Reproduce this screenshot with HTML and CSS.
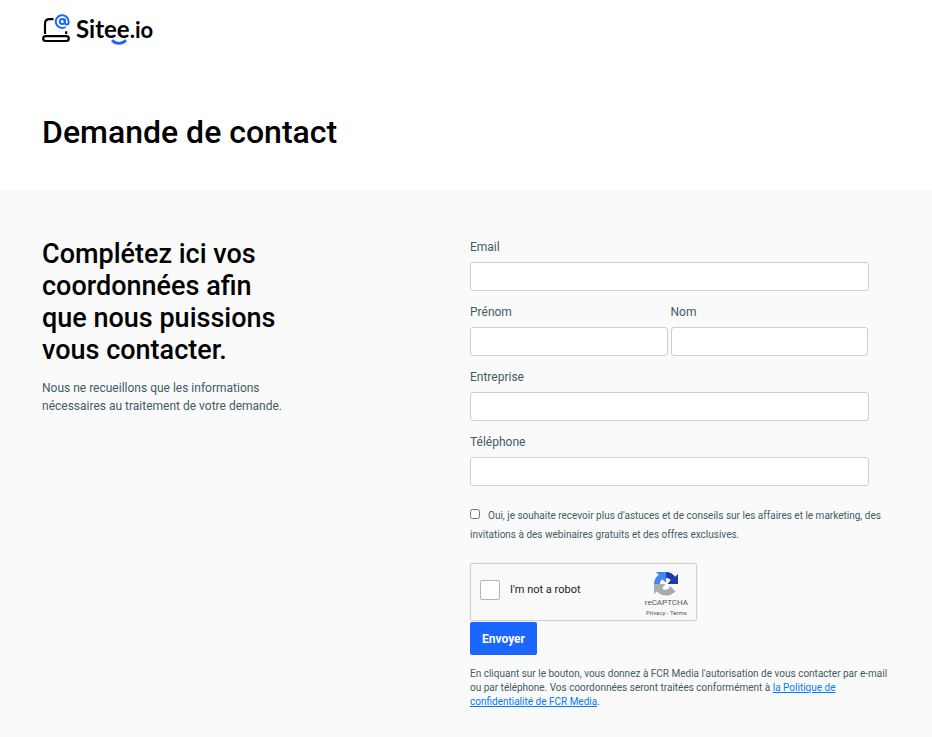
FILE: index.html
```html
<!DOCTYPE html>
<html lang="fr">
<head>
<meta charset="utf-8">
<meta name="viewport" content="width=device-width, initial-scale=1">
<title>Demande de contact</title>
<link rel="stylesheet" href="styles.css">
</head>
<body>
<header class="header">
  <a class="logo" href="#">
    <svg class="logo-mark" viewBox="0 0 28 32" fill="none" aria-hidden="true">
      <path d="M3 20V10C3 7 4.800 5.200 7.500 5.200h4M24.200 17.200v2.800" stroke="#000" stroke-width="2.200"/>
      <rect x="1.200" y="22.200" width="25.600" height="4.800" rx="2.400" stroke="#000" stroke-width="2.200"/>
      <path d="M23.600 13A6.400 6.400 0 1 1 26.600 7.500v.7c0 3-3.700 3-3.700.2V4.700" stroke="#1a66ff" stroke-width="2"/>
      <circle cx="20.300" cy="7.500" r="2.500" stroke="#1a66ff" stroke-width="2"/>
    </svg>
    <span class="logo-text"><span class="logo-name">Sitee</span>.io
      <svg class="logo-smile" viewBox="0 0 18 8" fill="none" aria-hidden="true"><path d="M2 2.200c4 4.200 10 4.200 14 0" stroke="#1a66ff" stroke-width="2.800"/></svg>
    </span>
  </a>
  <h1 class="title">Demande de contact</h1>
</header>
<main class="content">
  <section class="intro">
    <h2 class="intro-title">Complétez ici vos coordonnées afin que nous puissions vous contacter.</h2>
    <p class="intro-text">Nous ne recueillons que les informations nécessaires au traitement de votre demande.</p>
  </section>
  <form class="form">
    <div class="fields">
      <div class="field"><label for="email">Email</label><input id="email" type="email"></div>
      <div class="row">
        <div class="field"><label for="firstname">Prénom</label><input id="firstname" type="text"></div>
        <div class="field"><label for="lastname">Nom</label><input id="lastname" type="text"></div>
      </div>
      <div class="field"><label for="company">Entreprise</label><input id="company" type="text"></div>
      <div class="field"><label for="phone">Téléphone</label><input id="phone" type="tel"></div>
    </div>
    <label class="consent"><input class="consent-box" type="checkbox">Oui, je souhaite recevoir plus d'astuces et de conseils sur les affaires et le marketing, des invitations à des webinaires gratuits et des offres exclusives.</label>
    <div class="captcha">
      <label class="captcha-check"><input class="captcha-box" type="checkbox">I'm not a robot</label>
      <div class="captcha-brand">
        <svg class="captcha-logo" viewBox="0 0 64 64" aria-hidden="true">
          <path fill="#1c3aa9" d="M64 32V5l-7.500 7.500A32 32 0 0 0 32 0v16c5 0 9 1.500 12.500 5.500L36 32h28z"/>
          <path fill="#4285f4" d="M32 0H5l7.500 7.500A32 32 0 0 0 0 32h16c0-5 1.500-9 5.500-12.500L32 28V0z"/>
          <path fill="#ababab" d="M0 32v27l7.500-7.500A32 32 0 0 0 57 51L43 37c-2 6-6 10-12 10-4 0-7-1-9-4l8-11H0z"/>
        </svg>
        <span class="captcha-name">reCAPTCHA</span>
        <span class="captcha-links"><a href="#">Privacy</a> - <a href="#">Terms</a></span>
      </div>
    </div>
    <button class="submit" type="submit">Envoyer</button>
    <p class="legal">En cliquant sur le bouton, vous donnez à FCR Media l'autorisation de vous contacter par e-mail ou par téléphone. Vos coordonnées seront traitées conformément à <a href="#">la Politique de confidentialité de FCR Media</a>.</p>
  </form>
</main>
</body>
</html>
```

FILE: styles.css
```css
* { box-sizing: border-box; }

body {
  margin: 0;
  min-height: 100vh;
  display: flex;
  flex-direction: column;
  background: #fff;
  color: #425b66;
  font-family: Roboto, "Liberation Sans", sans-serif;
  font-size: 12px;
  line-height: 18px;
}

h1, h2, p { margin: 0; }

.header { padding: 14px 42px 39px; }

.logo {
  display: flex;
  gap: 6px;
  width: max-content;
  color: #000;
  text-decoration: none;
}

.logo-mark { width: 28px; height: 32px; }

.logo-text {
  position: relative;
  font-family: Lato, sans-serif;
  font-size: 22px;
  font-weight: 700;
  line-height: 30px;
}

.logo-name { font-size: 24px; }

.logo-smile {
  position: absolute;
  left: 34px;
  bottom: 0;
  width: 18px;
  height: 8px;
}

.title {
  margin-top: 67px;
  color: #000;
  font-size: 32px;
  font-weight: 500;
  line-height: 38px;
}

.content {
  flex: 1;
  display: grid;
  grid-template-columns: 1fr 1fr;
  padding: 48px 34px 28px 42px;
  background: #fafafa;
}

.intro { max-width: 250px; }

.intro-title {
  margin-bottom: 13px;
  color: #000;
  font-size: 27px;
  font-weight: 500;
  line-height: 32px;
}

.form { padding-right: 6px; }

.fields { padding-right: 23px; }

.field {
  display: flex;
  flex: 1;
  flex-direction: column;
  gap: 6px;
  margin-bottom: 12px;
}

.field label { color: #425b66; }

.field input {
  width: 100%;
  height: 29px;
  padding: 0 8px;
  border: 1px solid #cbd0d8;
  border-radius: 3px;
  background: #fff;
  font: inherit;
}

.row { display: flex; gap: 3px; padding-right: 1px; }

.consent {
  display: block;
  padding-top: 8px;
  font-size: 10px;
  line-height: 19px;
}

.consent-box {
  width: 10px;
  height: 10px;
  margin: 0 8px 0 0;
}

.captcha {
  display: flex;
  justify-content: space-between;
  width: 227px;
  height: 58px;
  margin-top: 19px;
  padding: 8px 8px 0 9px;
  border: 1px solid #d3d3d3;
  border-radius: 2px;
  background: #f9f9f9;
  box-shadow: 0 0 2px #ddd;
  color: #222;
}

.captcha-check {
  display: flex;
  align-items: center;
  gap: 10px;
  height: 36px;
  font-size: 11px;
}

.captcha-box {
  appearance: none;
  width: 20px;
  height: 20px;
  margin: 0;
  border: 1px solid #b5b5b5;
  border-radius: 2px;
  background: #fff;
}

.captcha-brand {
  display: flex;
  flex-direction: column;
  align-items: center;
  color: #555;
}

.captcha-logo { width: 24px; height: 24px; }
.captcha-name { font-size: 8px; line-height: 13px; }
.captcha-links { font-size: 6px; line-height: 8px; }
.captcha-links a { color: inherit; text-decoration: none; }

.submit {
  display: block;
  height: 33px;
  margin-top: 1px;
  padding: 0 12px;
  border: 0;
  border-radius: 2px;
  background: #1a66ff;
  color: #fff;
  font: 700 12px/18px Roboto, sans-serif;
}

.legal {
  margin-top: 12px;
  font-size: 10px;
  line-height: 14px;
}

.legal a { color: #007bff; }
```
